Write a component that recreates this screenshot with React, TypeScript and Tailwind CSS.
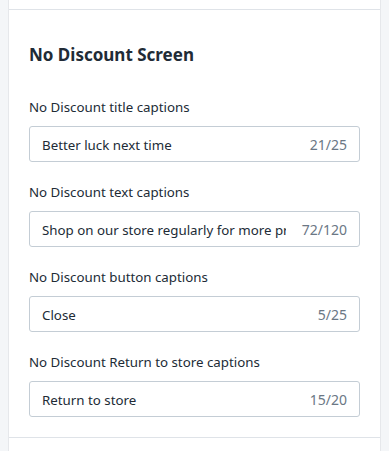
const fields = [
  { label: "No Discount title captions", value: "Better luck next time", max: 25 },
  {
    label: "No Discount text captions",
    value: "Shop on our store regularly for more promotions and exclusive discounts.",
    max: 120,
  },
  { label: "No Discount button captions", value: "Close", max: 25 },
  { label: "No Discount Return to store captions", value: "Return to store", max: 20 },
];

function CaptionField({ label, value, max }: { label: string; value: string; max: number }) {
  return (
    <div className="flex flex-col">
      <div className="h-5 leading-5 text-[13.3px] text-[#212b36] mb-[9px]">{label}</div>
      <div className="h-9 flex items-center rounded-[3px] border border-[#c4cdd5] bg-white px-3 pt-px">
        <div className="flex-1 min-w-0 overflow-hidden whitespace-nowrap leading-5 text-[13.3px] text-[#212b36]">
          {value}
        </div>
        <span className="ml-4 shrink-0 leading-5 text-[14px] text-[#6b7785]">
          {value.length}/{max}
        </span>
      </div>
    </div>
  );
}

export default function App() {
  return (
    <div
      className="min-h-[451px] bg-[#f4f6f8] px-[9px] flex"
      style={{ fontFamily: '"Noto Sans", "Open Sans", sans-serif' }}
    >
      <div className="flex-1 min-w-0 bg-white shadow-[-1px_0_0_#e6e8eb,1px_0_0_#e6e8eb]">
        <div className="h-[9px]" />
        <div className="border-y border-[#dfe3e8] px-5 pt-[33px] pb-5">
          <h2 className="h-6 leading-6 text-[17px] font-bold text-[#212b36] mb-[30px]">
            No Discount Screen
          </h2>
          <div className="flex flex-col gap-5">
            {fields.map((f) => (
              <CaptionField key={f.label} {...f} />
            ))}
          </div>
        </div>
      </div>
    </div>
  );
}
